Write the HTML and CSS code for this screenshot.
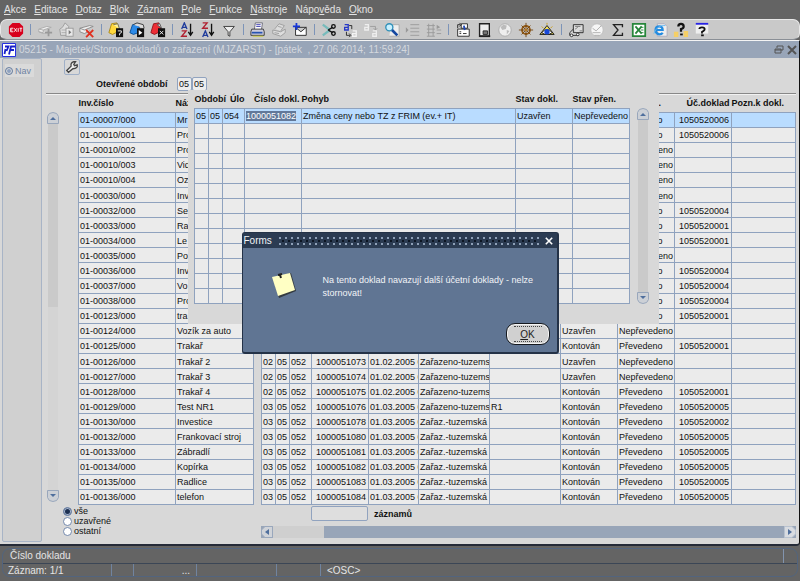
FILE: index.html
```html
<!DOCTYPE html>
<html lang="cs">
<head>
<meta charset="utf-8">
<title>Majetek/Storno dokladů o zařazení</title>
<link rel="stylesheet" href="styles.css">
<script src="records.js" defer></script>
</head>
<body>
<nav class="menubar">
  <a href="#"><u>A</u>kce</a><a href="#"><u>E</u>ditace</a><a href="#"><u>D</u>otaz</a><a href="#"><u>B</u>lok</a><a href="#"><u>Z</u>áznam</a><a href="#"><u>P</u>ole</a><a href="#"><u>F</u>unkce</a><a href="#"><u>N</u>ástroje</a><a href="#">Nápo<u>v</u>ěda</a><a href="#"><u>O</u>kno</a>
</nav>

<div class="toolbar">
  <button aria-label="Konec"><svg viewBox="0 0 18 18"><path d="M5 1h8l4 4v8l-4 4H5l-4-4V5z" fill="#d8001c"/><path d="M3 7v4h3M3 9h2M3 7h3M7 7l3 4M10 7l-3 4M11.500 7v4M13 7h3M14.500 7v4" stroke="#fff" fill="none"/></svg></button>
  <i></i>
  <button aria-label="Vložit záznam"><svg viewBox="0 0 18 18"><path d="M2 8l9-3 5 1-9 3zM2 8v3l5 1V9M2 11l5 2 5-2" fill="#eee" stroke="#aaa"/><path d="M13 8v8M9 12h8" stroke="#999" stroke-width="2"/></svg></button>
  <button aria-label="Kopie záznamu"><svg viewBox="0 0 18 18"><path d="M2 8l3-2 3-5 4 4v10H3z" fill="#ddd" stroke="#999"/><path d="M4 9h5M4 12h5" stroke="#aaa"/><rect x="9" y="7" width="8" height="9" fill="#e8e8e8" stroke="#999"/><path d="M12 9v5l3-2.500z" fill="#777"/></svg></button>
  <button aria-label="Smazat záznam"><svg viewBox="0 0 18 18"><path d="M1 7l11-3 4 1-10 4zM1 7v4l5 2 6-3" fill="#eee" stroke="#888"/><path d="M8 9l8 8M16 9l-8 8" stroke="#e03020" stroke-width="2"/></svg></button>
  <i></i>
  <button aria-label="Zadat dotaz"><svg viewBox="0 0 18 18"><path d="M1 12L4 2l6-1 3 9-8 4z" fill="#ffd83c" stroke="#a88413"/><path d="M6 3l5-1 2 6" fill="#fff4a0" stroke="#665"/><rect x="9" y="7" width="8" height="10" fill="#111"/><path d="M11 10h4v2l-2 1v2" stroke="#fff" fill="none"/></svg></button>
  <button aria-label="Provést dotaz"><svg viewBox="0 0 18 18"><path d="M1 12L4 3l6-1 3 9-8 3z" fill="#2d8be8" stroke="#064a91"/><path d="M5 3l4-2 7 2 1 4" fill="#ddd" stroke="#333"/><rect x="9" y="7" width="8" height="10" fill="#111"/><path d="M11 9l4 3-4 3z" fill="#fff"/></svg></button>
  <button aria-label="Zrušit dotaz"><svg viewBox="0 0 18 18"><path d="M1 12L4 2l6-1 3 9-8 4z" fill="#ed2d35" stroke="#921018"/><path d="M8 3l3-1 2 5z" fill="#ddd" stroke="#555"/><rect x="9" y="7" width="8" height="10" fill="#111"/><path d="M11 10l4 4M15 10l-4 4" stroke="#fff"/></svg></button>
  <i></i>
  <button aria-label="Třídit vzestupně"><svg viewBox="0 0 18 18"><path d="M3 8l3-7 3 7M4 6h4" fill="none" stroke="#203c9c" stroke-width="1.500"/><path d="M3 10h5l-5 6h6" fill="none" stroke="#b02030" stroke-width="1.500"/><path d="M13 2v12M10.500 11l2.500 4 2.500-4" fill="none" stroke="#111" stroke-width="1.500"/></svg></button>
  <button aria-label="Třídit sestupně"><svg viewBox="0 0 18 18"><path d="M3 17l3-7 3 7M4 15h4" fill="none" stroke="#203c9c" stroke-width="1.500"/><path d="M3 1h5L3 7h6" fill="none" stroke="#b02030" stroke-width="1.500"/><path d="M13 2v12M10.500 11l2.500 4 2.500-4" fill="none" stroke="#111" stroke-width="1.500"/></svg></button>
  <button aria-label="Filtr"><svg viewBox="0 0 18 18"><path d="M3 5h12l-5 6v5l-2-1v-4z" fill="#eee" stroke="#333"/></svg></button>
  <i></i>
  <button aria-label="Tisk"><svg viewBox="0 0 18 18"><path d="M5 8l1-7h8l-1 7" fill="#fff" stroke="#667"/><path d="M7 3h5M7 5h5" stroke="#33a"/><path d="M2 8h13l1 3v4H1v-4z" fill="#ccd" stroke="#333"/><path d="M2 12h12" stroke="#2854b0" stroke-width="2"/><path d="M3 16h12" stroke="#cc3"/></svg></button>
  <button aria-label="Tisk formuláře"><svg viewBox="0 0 18 18"><path d="M4 8l5-6 6 2-4 6M2 9l9 2 5-3v4l-5 4-9-3z" fill="#ddd" stroke="#999"/><path d="M8 5l4 1M4 12l5 1" stroke="#999"/></svg></button>
  <button aria-label="Nová zpráva"><svg viewBox="0 0 18 18"><path d="M4 6h12v9H4zM4 6l6 5 6-5" fill="#fff" stroke="#222"/><path d="M5 1v8M1 5h8" stroke="#1536d8" stroke-width="2"/></svg></button>
  <i></i>
  <button aria-label="Vyjmout"><svg viewBox="0 0 18 18"><path d="M2 3l8 6M2 15l8-6" stroke="#7bb" stroke-width="2.500"/><circle cx="14" cy="5" r="2" fill="none" stroke="#111" stroke-width="1.500"/><circle cx="14" cy="13" r="2" fill="none" stroke="#111" stroke-width="1.500"/><path d="M8 9l5 3M8 9l5-3" stroke="#111" stroke-width="1.500"/></svg></button>
  <button aria-label="Kopírovat"><svg viewBox="0 0 18 18"><path d="M3 3h4v6H3V6h4" stroke="#2638c8" stroke-width="1.500" fill="none"/><path d="M8 4h3v4M5 11v4h4M8 13l2 2-2 2" stroke="#222" fill="none"/><path d="M12 10h4v6h-4v-3h4" stroke="#f4f4f4" stroke-width="1.500" fill="none"/></svg></button>
  <button aria-label="Vložit"><svg viewBox="0 0 18 18"><path d="M2 3h4v6H2V6h4M11 10h4v6h-4v-3h4" stroke="#eee" stroke-width="1.500" fill="none"/><path d="M8 5h6v4M12 7l2 2 2-2" stroke="#999" fill="none"/></svg></button>
  <button aria-label="Hledat"><svg viewBox="0 0 18 18"><path d="M8 3h9v13H6" fill="#eee" stroke="#aaa"/><circle cx="6" cy="6" r="4" fill="#c8f0ff" stroke="#3090b8" stroke-width="1.500"/><path d="M9 9l6 6" stroke="#1648a0" stroke-width="3"/></svg></button>
  <button aria-label="Rozbalit seznam"><svg viewBox="0 0 18 18"><path d="M6 3h10M6 7h10M6 11h10M6 15h10" stroke="#999"/><path d="M1 6l3 3-3 3z" fill="#999"/></svg></button>
  <button aria-label="Sloupce"><svg viewBox="0 0 18 18"><path d="M3 2v14M8 2v14M1 4h9M1 8h9M1 12h9M1 16h9M12 9h5M12 13h5" stroke="#999"/><path d="M12 3v5l4-2z" fill="#999"/></svg></button>
  <i></i>
  <button aria-label="Přenést data"><svg viewBox="0 0 18 18"><path d="M3 8h13v8H3zM7 2h7v5H7z" fill="#fff" stroke="#222"/><path d="M3 7V3h3M5 1l2 2-2 2M5 11h2M9 13h4M5 13h2" stroke="#222" fill="none"/><path d="M10 4l1 5" stroke="#2048b8" stroke-width="2"/></svg></button>
  <button aria-label="Dokument"><svg viewBox="0 0 18 18"><path d="M4 2h11v14H4z" fill="#eee" stroke="#222" stroke-width="1.500"/><path d="M8 10h5v4H8z" fill="#777" stroke="#222"/><path d="M4 16h12" stroke="#222" stroke-width="2"/></svg></button>
  <button aria-label="Web"><svg viewBox="0 0 18 18"><circle cx="9" cy="9" r="7" fill="#eee" stroke="#aaa"/><path d="M7 3l4 1-1 4-4 1-2-3zM11 9l3 1-3 4z" fill="#bbb"/></svg></button>
  <button aria-label="Navigace"><svg viewBox="0 0 18 18"><circle cx="9" cy="9" r="4.500" fill="none" stroke="#945c16" stroke-width="2"/><path d="M9 1v16M1 9h16M4 4l10 10M14 4L4 14" stroke="#70400c"/><circle cx="9" cy="9" r="1.500" fill="#b77b20"/></svg></button>
  <button aria-label="Zobrazit"><svg viewBox="0 0 18 18"><path d="M1 14L9 4l8 10z" fill="#f2dc55" stroke="#111"/><path d="M3 12q6-7 12 0-6 4-12 0z" fill="#fff" stroke="#111"/><circle cx="9" cy="11" r="3" fill="#1748d8"/><path d="M3 5l2 2M15 5l-2 2M9 1v2" stroke="#cc9d10"/></svg></button>
  <i></i>
  <button aria-label="Doprava"><svg viewBox="0 0 18 18"><path d="M6 3h11v9H6zM6 8L2 12v3h10" fill="#ddd" stroke="#222"/><path d="M8 5h6M8 8l3-2M13 10h3" stroke="#777"/><circle cx="4" cy="15" r="1.500" fill="#fff" stroke="#222"/><circle cx="11" cy="14" r="1.500" fill="#fff" stroke="#222"/></svg></button>
  <button aria-label="Schválit"><svg viewBox="0 0 18 18"><circle cx="9" cy="9" r="7" fill="#f6f6f6" stroke="#bbb"/><path d="M4 7l4 3 6-6M4 12h9M6 15h6" stroke="#aaa" fill="none"/></svg></button>
  <button aria-label="Součet"><svg viewBox="0 0 18 18"><path d="M14 6V3H4l5 6-5 6h10v-3" fill="none" stroke="#222" stroke-width="1.500"/></svg></button>
  <button aria-label="Excel"><svg viewBox="0 0 18 18"><path d="M2 2h14v14H2z" fill="#fff" stroke="#27863b" stroke-width="2"/><path d="M5 5l7 8M12 5l-7 8" stroke="#27863b" stroke-width="2"/><path d="M11 6h3M11 9h3M11 12h3" stroke="#27863b"/></svg></button>
  <button aria-label="Internet"><svg viewBox="0 0 18 18"><path d="M6 2h8l3 3v11H6z" fill="#eee" stroke="#aab"/><path d="M4 9h8q0-4-4-4t-4 4 4 5q3 0 4-2" fill="none" stroke="#248ce0" stroke-width="2.500"/><path d="M2 13q4-10 13-9" fill="none" stroke="#62b6ef"/></svg></button>
  <button aria-label="Nápověda k položce"><svg viewBox="0 0 18 18"><path d="M1 11h5v6H1zM12 10h5v7h-5z" fill="#f5cf66"/><path d="M6 5q0-3 3-3t3 3q0 2-3 3v3" fill="none" stroke="#111" stroke-width="2.500"/><path d="M8 13h3v2H8z" fill="#111"/></svg></button>
  <button aria-label="Nápověda"><svg viewBox="0 0 18 18"><path d="M2 3h14v10H2z" fill="#eee"/><path d="M2 2h14" stroke="#2722e8" stroke-width="2"/><path d="M6 8q0-2 3-2t3 2-3 3v2" fill="none" stroke="#111" stroke-width="2"/><path d="M8 14h3v2H8z" fill="#111"/></svg></button>
</div>

<main class="window">
  <header class="titlebar">
    <svg class="logo" viewBox="0 0 14 14"><path d="M.500.500h13v13H.500z" fill="#fff" stroke="#2430e0"/><path d="M3.500 6L2.500 11M3 3.500h3.500L4.500 8M7 11.500l2-8h4M8 7h4" stroke="#1620c8" stroke-width="1.800" fill="none"/></svg>
    <h1>05215 - Majetek/Storno dokladů o zařazení (MJZARST) - [pátek&nbsp; , 27.06.2014; 11:59:24]</h1>
    <button aria-label="Obnovit okno"><svg viewBox="0 0 10 10"><path d="M3 3V1h6v4H7M1 4h6v4H1zM1 5h6" fill="none" stroke="#555"/></svg></button>
    <button aria-label="Zavřít okno"><svg viewBox="0 0 10 10"><path d="M1 1l8 8M9 1L1 9" stroke="#555" stroke-width="2"/></svg></button>
  </header>

  <div class="content">
    <aside class="side"><label><input type="radio" name="side" class="side-radio"> Nav</label></aside>
    <section class="form">
      <button class="wrench" aria-label="Nastavení"><svg viewBox="0 0 16 16"><path d="M2 12l5-5q-1-4 3-5l2 0-2 3 1 1.500 3-1q1 4-5 4.500l-5 4z" fill="#eee" stroke="#444" stroke-width="1.500"/></svg></button>
      <div class="period">
        <label for="p1">Otevřené období</label>
        <input id="p1" value="05"><input aria-label="Období do" value="05">
      </div>
      <div class="records">
        <div class="vscroll"><button aria-label="Nahoru"><svg viewBox="0 0 12 12"><path d="M.500 11.500v-7q1-4 5.500-4t5.500 4v7z" fill="#ccd0d6" stroke="#99a7bc"/><path d="M3 8l3-3 3 3z" fill="#4f6f9d"/></svg></button><span class="thumb"></span><button aria-label="Dolů"><svg viewBox="0 0 12 12"><path d="M.500.500v7q1 4 5.500 4t5.500-4v-7z" fill="#ccd0d6" stroke="#99a7bc"/><path d="M3 4l3 3 3-3z" fill="#4f6f9d"/></svg></button></div>
        <table class="grid assets">
          <colgroup><col class="w-inv"><col class="w-name"><col class="w-gap"><col class="w-2"><col class="w-2"><col class="w-3"><col class="w-num"><col class="w-date"><col class="w-move"><col class="w-move"><col class="w-num"><col class="w-num"><col class="w-num"><col></colgroup>
          <thead><tr><th>Inv.číslo</th><th>Název</th><th></th><th></th><th></th><th></th><th></th><th></th><th></th><th></th><th></th><th>Stav přen.</th><th class="right">Úč.doklad</th><th>Pozn.k dokl.</th></tr></thead>
          <tbody id="assets"></tbody>
        </table>
      </div>
      <div class="foot">
        <fieldset>
          <label><input type="radio" name="state" checked>vše</label>
          <label><input type="radio" name="state">uzavřené</label>
          <label><input type="radio" name="state">ostatní</label>
        </fieldset>
        <div class="foot-right">
          <div class="count"><input id="count"><label for="count">záznamů</label></div>
          <div class="hscroll"><button aria-label="Doleva"><svg viewBox="0 0 12 12"><path d="M4 .500h7.500v11H4L.500 8V4z" fill="#d0d3d8" stroke="#99a7bc"/><path d="M8 3v6L4 6z" fill="#4f6f9d"/></svg></button><span class="thumb"></span><button aria-label="Doprava"><svg viewBox="0 0 12 12"><path d="M8 .500H.500v11H8L11.500 8V4z" fill="#d8dbe0" stroke="#b8c2d0"/><path d="M4 3v6l4-3z" fill="#4f6f9d"/></svg></button></div>
        </div>
      </div>
    </section>
  </div>

  <section class="popup">
    <table class="grid documents">
      <colgroup><col class="w-2"><col class="w-2"><col class="w-3"><col class="w-num"><col><col class="w-num"><col class="w-num"></colgroup>
      <thead><tr><th colspan="2">Období</th><th class="flush">Úlo</th><th class="right">Číslo dokl.</th><th>Pohyb</th><th>Stav dokl.</th><th>Stav přen.</th></tr></thead>
      <tbody id="documents"></tbody>
    </table>
    <div class="vscroll"><button aria-label="Nahoru"><svg viewBox="0 0 12 12"><path d="M.500 11.500v-7q1-4 5.500-4t5.500 4v7z" fill="#ccd0d6" stroke="#99a7bc"/><path d="M3 8l3-3 3 3z" fill="#4f6f9d"/></svg></button><span class="thumb full"></span><button aria-label="Dolů"><svg viewBox="0 0 12 12"><path d="M.500.500v7q1 4 5.500 4t5.500-4v-7z" fill="#ccd0d6" stroke="#99a7bc"/><path d="M3 4l3 3 3-3z" fill="#4f6f9d"/></svg></button></div>
  </section>
</main>

<footer class="status">
  <div class="status-box">
    <p class="hint">Číslo dokladu</p>
    <div class="cells"><span class="s-rec">Záznam: 1/1</span><span class="s-a"></span><span class="s-b">...</span><span class="s-c"></span><span class="s-d"></span><span class="s-osc">&lt;OSC&gt;</span></div>
  </div>
</footer>

<div class="dialog" role="dialog" aria-labelledby="dialog-title">
  <header><h2 id="dialog-title">Forms</h2><span class="grip"></span><button aria-label="Zavřít"><svg viewBox="0 0 10 10"><path d="M1 1l8 8M9 1L1 9" stroke="#fff" stroke-width="2"/></svg></button></header>
  <div class="message">
    <svg viewBox="0 0 26 26"><path d="M2 5l18-5 5 18-17 7z" fill="#333a40"/><path d="M1 4l18-4 5 17-17 6z" fill="#ffffc4"/><path d="M7 2l4-1M9 2l1 3" stroke="#222" stroke-width="2"/></svg>
    <p>Na tento doklad navazují další účetní doklady - nelze stornovat!</p>
  </div>
  <button class="ok"><span><u>O</u>K</span></button>
</div>
</body>
</html>
```
FILE: styles.css
```css
* { box-sizing: border-box; }
body {
  margin: 0;
  min-height: 100vh;
  display: flex;
  flex-direction: column;
  position: relative;
  background: #646464;
  color: #111;
  font: 9px/12px "Liberation Sans", Arial, sans-serif;
}
button { padding: 0; border: 0; background: none; font: inherit; display: block; }
svg { display: block; width: 100%; height: 100%; }
h1, h2, p { margin: 0; font-weight: normal; }
input { font: inherit; color: inherit; margin: 0; }

.menubar { display: flex; gap: 8px; height: 19px; padding: 4px 4px 0; font-size: 10px; }
.menubar a { color: #e4e4e4; text-decoration: none; }

.toolbar {
  display: flex;
  align-items: center;
  gap: 1px;
  height: 21px;
  padding-left: 5px;
  background: #c9c9c9;
  border: 1px solid #e8e8e8;
  border-bottom-color: #8a8f96;
  border-radius: 7px;
}
.toolbar button { flex: none; width: 20px; height: 18px; padding: 1px 2px; }
.toolbar i { flex: none; width: 7px; height: 11px; background: linear-gradient(#7d94b8, #7d94b8) center / 1px 100% no-repeat; }

.window {
  position: relative;
  flex: 1;
  display: flex;
  flex-direction: column;
  background: #d8d8d8;
  border-top: 1px solid #f4f4f4;
  border-right: 1px solid #111;
  border-bottom: 2px solid #252b38;
  border-bottom-right-radius: 4px;
}
.titlebar { display: flex; align-items: center; gap: 3px; height: 17px; padding: 0 2px; background: #98a5b8; }
.titlebar h1 { flex: 1; font-size: 10px; color: #d4d8de; }
.titlebar .logo { width: 14px; height: 14px; }
.titlebar button { width: 10px; height: 10px; }

.content { flex: 1; display: flex; gap: 4px; padding: 0 3px 2px 2px; }
.side { width: 40px; border: 1px solid #a8b4c6; border-radius: 2px; padding: 5px 2px; background: #d0d0d0; color: #6f83a3; }
.side label { display: flex; align-items: center; gap: 2px; width: 29px; height: 13px; background: #dadada; }
.side-radio { appearance: none; width: 8px; height: 8px; border: 1px solid #6f83a3; border-radius: 50%; background: #8ea1bf; box-shadow: inset 0 0 0 1px #ddd; }

.form { flex: 1; min-width: 0; display: flex; flex-direction: column; }
.wrench { width: 16px; height: 16px; margin: 1px 0 0 18px; border: 1px solid #a0b0c8; border-radius: 2px; }
.period { display: flex; align-items: center; height: 18px; padding-left: 50px; }
.period label { font-weight: bold; width: 81px; }
.period input { width: 15px; height: 14px; padding: 0 1px; border: 1px solid #91a3bf; border-radius: 2px; background: #ededed; }

.records { display: flex; gap: 19px; padding-left: 1px; border-top: 1px solid #888; box-shadow: inset 0 1px #f2f2f2; }
.vscroll { flex: none; width: 12px; display: flex; flex-direction: column; margin-top: 18px; }
.records .vscroll { margin-bottom: 3px; }
.vscroll button { width: 12px; height: 12px; flex: none; }
.vscroll .thumb { flex: 1; margin: 0 1px; background: linear-gradient(#cacaca 50%, #d4d4d4 50%); }
.vscroll .full { background: #cacaca; }

.grid { flex: 1; min-width: 0; width: 100%; table-layout: fixed; border-collapse: collapse; }
.grid th { height: 18px; padding: 0; text-align: left; white-space: nowrap; font-weight: bold; }
.grid .right { text-align: right; padding-right: 2px; }
.grid .flush { text-align: right; }
.grid td {
  height: 15px;
  padding: 1px 1px 0;
  border: 1px solid #8fa2be;
  background: #ebebeb;
  line-height: 12px;
  white-space: nowrap;
  overflow: hidden;
}
.grid .current td { background: #b9dcff; }
.grid td.gap, .grid .current td.gap { background: none; border-top: 0; border-bottom: 0; }
.assets { height: 411px; }
.w-inv { width: 97px; }
.w-name { width: 78px; }
.w-gap { width: 8px; }
.w-2 { width: 14px; }
.w-3 { width: 22px; }
.w-num { width: 57px; }
.w-date { width: 50px; }
.w-move { width: 71px; }

.foot { display: flex; }
.foot fieldset { width: 215px; margin: 0; padding: 1px 0 0 17px; border: 0; }
.foot fieldset label { display: flex; align-items: center; gap: 2px; height: 10px; }
.foot input[type="radio"] { appearance: none; width: 9px; height: 9px; border: 1px solid #7389ad; border-radius: 50%; background: #fff; }
.foot input[type="radio"]:checked { background: #1c2f50; box-shadow: inset 0 0 0 1px #a9b8d0; }
.foot-right { flex: 1; }
.count { display: flex; align-items: center; gap: 6px; padding: 1px 0 0 50px; font-weight: bold; }
.count input { width: 57px; height: 15px; border: 1px solid #91a3bf; border-radius: 2px; background: #dedede; }
.hscroll { display: flex; height: 12px; margin-top: 5px; background: #98a5b8; }
.hscroll button { width: 12px; height: 12px; }
.hscroll .thumb { width: 51px; margin-right: auto; background: #cfcfcf; }

.popup { position: absolute; left: 188px; top: 49px; width: 471px; padding: 0 10px 20px 6px; display: flex; gap: 7px; background: #d8d8d8; }
.popup mark { background: #627899; color: #fff; }

.status { padding: 2px 2px 4px; height: 35px; }
.status-box { height: 29px; border: 1px solid #52647e; border-radius: 8px; color: #e4e4e4; font-size: 10px; }
.hint { height: 14px; line-height: 14px; padding-left: 7px; margin-right: 13px; border-right: 1px solid #8294ae; }
.cells { display: flex; height: 13px; line-height: 14px; border-top: 1px solid #3b4656; padding-left: 5px; }
.cells span { border-right: 1px solid #71849f; }
.s-rec { width: 104px; }
.s-a { width: 22px; }
.s-b { width: 63px; text-align: right; padding-right: 6px; }
.s-c { width: 80px; }
.s-d { width: 44px; }
.cells .s-osc { border: 0; padding-left: 6px; }

.dialog {
  position: absolute;
  top: 232px;
  left: 0;
  right: 0;
  width: 317px;
  margin: 0 auto;
  background: #607593;
  color: #f2f4f7;
  border: 1px solid #243247;
  border-right-width: 2px;
  border-bottom-width: 2px;
  border-radius: 3px;
}
.dialog header { display: flex; align-items: center; gap: 6px; height: 15px; padding: 0 4px 0 1px; background: #2b3b52; }
.dialog h2 { font-size: 10px; }
.grip { flex: 1; height: 9px; background: radial-gradient(circle at 2px 2px, #8ea0b8 0 1px, transparent 1px) 0 0 / 6px 6px, radial-gradient(circle at 2px 2px, #0c1523 0 1px, transparent 1px) 3px 3px / 6px 6px; }
.dialog header button { width: 8px; height: 8px; }
.message { display: flex; align-items: flex-start; gap: 26px; padding: 25px 4px 0 28px; }
.message svg { flex: none; width: 26px; height: 26px; }
.message p { padding-top: 1px; line-height: 13px; }
.ok {
  width: 44px;
  height: 22px;
  margin: 23px 7px 7px auto;
  padding: 2px 7px;
  border: 1px solid #15191f;
  border-radius: 9px;
  background: #d0d0d0;
  box-shadow: inset 0 0 0 1px #f4f4f4;
  color: #222;
  font-size: 10px;
}
.ok span { display: block; height: 16px; line-height: 15px; border: 1px dotted #444; border-width: 1px 0; }
```
FILE: records.js
```js
const PREV = "Převedeno";
const NEPREV = "Nepřevedeno";

// inventory number, name, month, document, movement, note, document state, transfer state, accounting document
const assets = [
  ["01-00007/000", "Mr", "", "", "", "", "", PREV, "1050520006"],
  ["01-00010/001", "Pro", "", "", "", "", "", PREV, "1050520006"],
  ["01-00010/002", "Pro", "", "", "", "", "", NEPREV, ""],
  ["01-00010/003", "Vid", "", "", "", "", "", NEPREV, ""],
  ["01-00010/004", "Oz", "", "", "", "", "", NEPREV, ""],
  ["01-00030/000", "Inv", "", "", "", "", "", NEPREV, ""],
  ["01-00032/000", "Se", "", "", "", "", "", PREV, "1050520004"],
  ["01-00033/000", "Ra", "", "", "", "", "", PREV, "1050520001"],
  ["01-00034/000", "Le", "", "", "", "", "", PREV, "1050520001"],
  ["01-00035/000", "Po", "", "", "", "", "", NEPREV, ""],
  ["01-00036/000", "Inv", "", "", "", "", "", PREV, "1050520004"],
  ["01-00037/000", "Vo", "", "", "", "", "", PREV, "1050520004"],
  ["01-00038/000", "Pro", "", "", "", "", "", PREV, "1050520004"],
  ["01-00123/000", "tra", "", "", "", "", "", PREV, "1050520001"],
  ["01-00124/000", "Vozík za auto", "", "", "", "", "Uzavřen", NEPREV, ""],
  ["01-00125/000", "Trakař", "", "", "", "", "Kontován", PREV, "1050520001"],
  ["01-00126/000", "Trakař 2", "02", "1000051073", "Zařazeno-tuzems", "", "Uzavřen", NEPREV, ""],
  ["01-00127/000", "Trakař 3", "02", "1000051074", "Zařazeno-tuzems", "", "Uzavřen", NEPREV, ""],
  ["01-00128/000", "Trakař 4", "02", "1000051075", "Zařazeno-tuzems", "", "Kontován", PREV, "1050520001"],
  ["01-00129/000", "Test NR1", "03", "1000051076", "Zařazeno-tuzems", "R1", "Kontován", PREV, "1050520005"],
  ["01-00130/000", "Investice", "03", "1000051078", "Zařaz.-tuzemská", "", "Kontován", PREV, "1050520002"],
  ["01-00132/000", "Frankovací stroj", "03", "1000051080", "Zařaz.-tuzemská", "", "Kontován", PREV, "1050520005"],
  ["01-00133/000", "Zábradlí", "03", "1000051081", "Zařaz.-tuzemská", "", "Kontován", PREV, "1050520005"],
  ["01-00134/000", "Kopírka", "03", "1000051082", "Zařaz.-tuzemská", "", "Kontován", PREV, "1050520005"],
  ["01-00135/000", "Radlice", "03", "1000051083", "Zařaz.-tuzemská", "", "Kontován", PREV, "1050520005"],
  ["01-00136/000", "telefon", "03", "1000051084", "Zařaz.-tuzemská", "", "Kontován", PREV, "1050520005"]
];

const cell = (text, cls = "") => `<td class="${cls}">${text}</td>`;
const row = (cells, i) => `<tr class="${i ? "" : "current"}">${cells.join("")}</tr>`;

document.getElementById("assets").innerHTML = assets.map((a, i) => {
  const [inv, name, month, doc, move, note, state, transfer, account] = a;
  return row([
    cell(inv), cell(name), cell("", "gap"), cell(month), cell(month && "05"), cell(month && "052"),
    cell(doc, "right"), cell(month && `01.${month}.2005 0`), cell(move), cell(note),
    cell(state), cell(transfer), cell(account, "right"), cell("")
  ], i);
}).join("");

const documents = [["05", "05", "054", "<mark>1000051082</mark>", "Změna ceny nebo TZ z FRIM (ev.+ IT)", "Uzavřen", NEPREV]];
while (documents.length < 13) documents.push(Array(7).fill(""));
document.getElementById("documents").innerHTML = documents.map((d, i) => row(d.map(t => cell(t)), i)).join("");
```
